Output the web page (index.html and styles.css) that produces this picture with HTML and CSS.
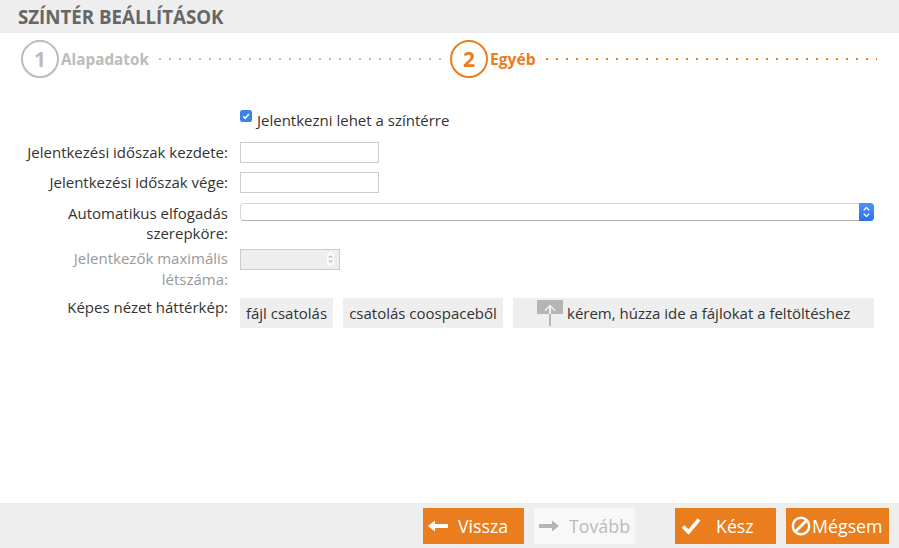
FILE: index.html
```html
<!DOCTYPE html>
<html lang="hu">
<head>
<meta charset="utf-8">
<title>Színtér beállítások</title>
<link rel="stylesheet" href="styles.css">
</head>
<body>
<div class="page">
  <header class="title-bar"><h1>Színtér beállítások</h1></header>
  <nav class="steps">
    <div class="step step-done">
      <span class="step-num">1</span><span class="step-name">Alapadatok</span><span class="step-line"></span>
    </div>
    <div class="step step-active">
      <span class="step-num">2</span><span class="step-name">Egyéb</span><span class="step-line"></span>
    </div>
  </nav>
  <main class="form">
    <div class="row row-check">
      <div class="label"></div>
      <label class="check">
        <svg class="check-box" viewBox="0 0 12 12" width="12" height="12"><rect width="12" height="12" rx="2.5" fill="#3b82e8"/><path d="M3.2 6.2 5.2 8.2 8.9 3.9" fill="none" stroke="#fff" stroke-width="1.6"/></svg>
        <span>Jelentkezni lehet a színtérre</span>
      </label>
    </div>
    <div class="row row-input">
      <div class="label">Jelentkezési időszak kezdete:</div>
      <input class="text-input" type="text">
    </div>
    <div class="row row-input">
      <div class="label">Jelentkezési időszak vége:</div>
      <input class="text-input" type="text">
    </div>
    <div class="row row-select">
      <div class="label">Automatikus elfogadás szerepköre:</div>
      <div class="select">
        <span class="select-arrows">
          <svg viewBox="0 0 15 18" width="15" height="18"><path d="M4.7 7.3 7.5 4.6 10.3 7.3M4.7 10.7 7.5 13.4 10.3 10.7" fill="none" stroke="#fff" stroke-width="1.4"/></svg>
        </span>
      </div>
    </div>
    <div class="row row-number">
      <div class="label label-disabled">Jelentkezők maximális létszáma:</div>
      <div class="number">
        <span class="spinner">
          <svg viewBox="0 0 7 12" width="7" height="12"><path d="M2 4.6 3.5 2.8 5 4.6M2 7.4 3.5 9.2 5 7.4" fill="none" stroke="#999" stroke-width="1"/></svg>
        </span>
      </div>
    </div>
    <div class="row row-files">
      <div class="label">Képes nézet háttérkép:</div>
      <div class="files">
        <button class="file-btn btn-attach" type="button">fájl csatolás</button>
        <button class="file-btn btn-space" type="button">csatolás coospaceből</button>
        <div class="file-btn drop">
          <svg class="drop-icon" viewBox="0 0 26 26" width="26" height="26"><rect width="26" height="14" fill="#b5b5b5"/><rect x="12" y="7" width="2" height="19" fill="#b5b5b5"/><path d="M7.8 10.8 13 5.6 18.2 10.8" fill="none" stroke="#eee" stroke-width="1.5"/><rect x="12" y="6.5" width="2" height="7.5" fill="#eee"/></svg>
          <span>kérem, húzza ide a fájlokat a feltöltéshez</span>
        </div>
      </div>
    </div>
  </main>
  <footer class="footer">
    <button class="action" type="button">
      <svg viewBox="0 0 20 14" width="20" height="14"><path d="M0 7 7 1.5V5H20V9H7V12.5Z" fill="#fff"/></svg>
      <span>Vissza</span>
    </button>
    <button class="action action-disabled" type="button">
      <svg viewBox="0 0 20 14" width="20" height="14"><path d="M20 7 13 1.5V5H0V9H13V12.5Z" fill="#b4b4b4"/></svg>
      <span>Tovább</span>
    </button>
    <button class="action action-done" type="button">
      <svg viewBox="0 0 20 18" width="20" height="18"><path d="M2 9.5 7.5 15 18 2.5" fill="none" stroke="#fff" stroke-width="3.6"/></svg>
      <span>Kész</span>
    </button>
    <button class="action action-cancel" type="button">
      <svg viewBox="0 0 20 20" width="20" height="20"><circle cx="10" cy="10" r="8.2" fill="none" stroke="#fff" stroke-width="2.4"/><path d="M4.5 15.5 15.5 4.5" stroke="#fff" stroke-width="2.8"/></svg>
      <span>Mégsem</span>
    </button>
  </footer>
</div>
</body>
</html>
```
FILE: styles.css
```css
* { box-sizing: border-box; }
html, body { margin: 0; height: 100%; }
body {
  font-family: "Open Sans", "Liberation Sans", sans-serif;
  font-size: 15px;
  color: #333;
  background: #fff;
}
.page { height: 548px; display: flex; flex-direction: column; overflow: hidden; }

.title-bar { height: 33px; background: #eee; padding-left: 18px; flex: none; }
.title-bar h1 {
  margin: 0;
  font-size: 18.7px;
  line-height: 33px;
  font-weight: 700;
  text-transform: uppercase;
  color: #666;
}

.steps { display: flex; padding: 7px 22px 0 21px; flex: none; height: 45px; }
.step { display: flex; align-items: center; height: 38px; }
.step-done { width: 429px; color: #bbb; padding-right: 3px; }
.step-active { flex: 1; color: #ea7d1d; }
.step-num {
  width: 38px; height: 38px; flex: none;
  border: 2px solid currentColor; border-radius: 50%;
  display: flex; align-items: center; justify-content: center;
  font-size: 21px; font-weight: 700;
}
.step-name { font-size: 15.3px; font-weight: 700; margin-left: 2px; }
.step-active .step-name { font-size: 15.6px; }
.step-line {
  flex: 1; height: 2px; margin-left: 10px;
  background-image: linear-gradient(90deg, currentColor 2px, transparent 2px);
  background-size: 10px 2px;
  background-repeat: repeat-x;
}

.form { flex: 1; padding-top: 32px; }
.row { display: grid; grid-template-columns: 228px 1fr; column-gap: 12px; padding-right: 25px; align-items: start; }
.label { text-align: right; line-height: 21px; padding-left: 20px; }
.label-disabled { color: #999; }

.row-check { height: 32px; }
.check { display: flex; align-items: flex-start; gap: 5px; }
.check-box { flex: none; }
.check span { line-height: 21px; }

.row-input { height: 30px; }
.text-input {
  display: block; width: 139px; height: 21px;
  border: 1px solid #ccc; border-radius: 0; padding: 0; background: #fff;
}

.row-select { height: 47px; padding-top: 1px; }
.row-select .label { line-height: 20px; }
.select {
  height: 18px; position: relative;
  border: 1px solid #d6d6d6; border-bottom-color: #b4b4b4;
  border-radius: 4px; background: #fff;
}
.select-arrows {
  position: absolute; right: -1px; top: -1px;
  width: 15px; height: 18px;
  background: linear-gradient(#4d94f8, #2a6ff0);
  border-radius: 0 4px 4px 0;
  display: block;
}
.select-arrows svg { display: block; }

.row-number { height: 49px; }
.row-number .label, .row-files .label { margin-top: -1px; }
.number {
  width: 100px; height: 21px; position: relative;
  background: #eee; border: 1px solid #ccc;
}
.spinner {
  position: absolute; right: 5px; top: 2px;
  width: 7px; height: 14px;
  background: #fafafa; border-radius: 3.5px;
  display: flex; align-items: center;
}
.spinner svg { display: block; }

.files { display: flex; gap: 10px; }
.file-btn {
  height: 30px; background: #eee; border: 0; padding: 0;
  font: inherit; color: #333; line-height: 30px; white-space: nowrap;
}
.btn-attach { width: 93px; }
.btn-space { width: 160px; }
.drop { flex: 1; display: flex; align-items: flex-start; padding-left: 24px; gap: 4px; }
.drop-icon { flex: none; margin-top: 2px; }

.footer {
  height: 45px; flex: none; background: #eee;
  display: flex; padding: 5px 10px 0 0; justify-content: flex-end; align-items: flex-start;
}
.action {
  width: 101px; height: 36px; border: 0; padding: 0 0 0 5px;
  background: #ea7d1d; color: #fff;
  font: 500 17.8px "Open Sans", sans-serif;
  display: flex; align-items: center; gap: 10px;
  margin-left: 10px;
}
.action svg { flex: none; }
.action-disabled { background: #f8f8f8; color: #bbb; }
.action-done { margin-left: 40px; padding-left: 6px; gap: 15px; }
.action-cancel { width: 103px; padding-left: 5px; gap: 1px; }
```
